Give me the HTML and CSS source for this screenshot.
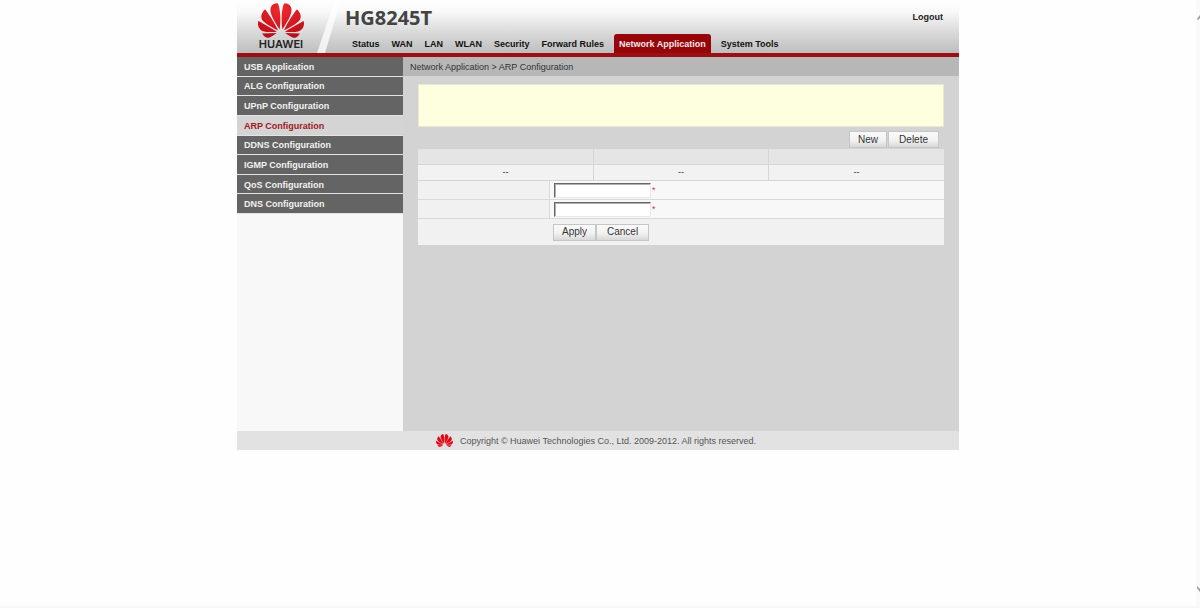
FILE: index.html
```html
<!DOCTYPE html>
<html lang="en">
<head>
<meta charset="utf-8">
<title>HG8245T</title>
<link rel="stylesheet" href="styles.css">
</head>
<body>
<svg class="symbols" aria-hidden="true">
  <symbol id="petals" viewBox="0 2.9 24 18.2">
    <path d="M3.67 6.14S1.82 7.91 1.72 9.78v.35c.08 1.51 1.22 2.4 1.22 2.4 1.83 1.79 6.26 4.04 7.3 4.55 0 0 .06.03.1-.01l.02-.04v-.04C7.52 10.8 3.67 6.14 3.67 6.14zM9.65 18.6c-.02-.08-.1-.08-.1-.08l-7.38.26c.8 1.43 2.15 2.53 3.56 2.2.96-.25 3.16-1.78 3.88-2.3.06-.05.04-.09.04-.09zm.08-.78C6.49 15.63.21 12.28.21 12.28c-.15.46-.2.9-.21 1.3v.07c0 1.07.4 1.82.4 1.82.8 1.69 2.34 2.2 2.34 2.2.7.3 1.4.31 1.4.31.12.02 4.4 0 5.54 0 .05 0 .08-.05.08-.05v-.06c0-.03-.03-.05-.03-.05zM9.06 3.19a3.42 3.42 0 00-2.57 3.15v.41c.03.6.16 1.05.16 1.05.66 2.9 3.86 7.65 4.55 8.65.05.05.1.03.1.03a.1.1 0 00.06-.1c1.06-10.6-1.11-13.42-1.11-13.42-.32.02-1.19.23-1.19.23zm8.3 2.27s-.49-1.8-2.44-2.28c0 0-.57-.14-1.17-.22 0 0-2.18 2.81-1.12 13.43.01.07.06.08.06.08.07.03.1-.03.1-.03.72-1.03 3.9-5.76 4.55-8.64 0 0 .36-1.4.02-2.34zm-2.92 13.07s-.07 0-.09.05c0 0-.01.07.03.1.7.51 2.85 2 3.88 2.3 0 0 .16.05.43.06h.14c.69-.02 1.9-.37 3-2.26l-7.4-.25zm7.83-8.41c.14-2.06-1.94-3.97-1.94-3.98 0 0-3.85 4.66-6.67 10.8 0 0-.03.08.02.13l.04.01h.06c1.06-.53 5.46-2.77 7.28-4.54 0 0 1.15-.93 1.21-2.42zm1.52 2.14s-6.28 3.37-9.52 5.55c0 0-.05.04-.03.11 0 0 .03.06.07.06 1.16 0 5.56 0 5.67-.02 0 0 .57-.02 1.27-.29 0 0 1.56-.5 2.37-2.27 0 0 .73-1.45.17-3.14z"/>
  </symbol>
</svg>
<div class="window">
  <div class="page">
    <header class="header">
      <div class="brand">
        <svg class="slash" viewBox="0 0 24 53" preserveAspectRatio="none" aria-hidden="true"><path d="M18 0H24L8 53H0Z" fill="#fff" fill-opacity=".75"/></svg>
        <svg class="brand-mark" aria-hidden="true">
          <defs><radialGradient id="shade" cx=".5" cy=".2" r=".8"><stop offset="0" stop-color="#ee2a30"/><stop offset="1" stop-color="#bd0c16"/></radialGradient></defs>
          <use href="#petals" fill="url(#shade)"/>
        </svg>
        <span class="brand-name">HUAWEI</span>
      </div>
      <div class="masthead">
        <div class="title-row">
          <h1 class="model">HG8245T</h1>
          <a class="logout" href="#">Logout</a>
        </div>
        <nav class="tabs">
          <a class="tab" href="#">Status</a>
          <a class="tab" href="#">WAN</a>
          <a class="tab" href="#">LAN</a>
          <a class="tab" href="#">WLAN</a>
          <a class="tab" href="#">Security</a>
          <a class="tab" href="#">Forward Rules</a>
          <a class="tab tab-active" href="#">Network Application</a>
          <a class="tab" href="#">System Tools</a>
        </nav>
      </div>
    </header>
    <div class="body">
      <nav class="sidebar">
        <ul class="menu">
          <li><a href="#">USB Application</a></li>
          <li><a href="#">ALG Configuration</a></li>
          <li><a href="#">UPnP Configuration</a></li>
          <li class="current"><a href="#">ARP Configuration</a></li>
          <li><a href="#">DDNS Configuration</a></li>
          <li><a href="#">IGMP Configuration</a></li>
          <li><a href="#">QoS Configuration</a></li>
          <li><a href="#">DNS Configuration</a></li>
        </ul>
      </nav>
      <main class="main">
        <div class="breadcrumb">Network Application &gt; ARP Configuration</div>
        <div class="content">
          <div class="notice"></div>
          <div class="toolbar">
            <button class="btn" type="button">New</button>
            <button class="btn btn-wide" type="button">Delete</button>
          </div>
          <table class="list">
            <thead><tr><th></th><th></th><th></th></tr></thead>
            <tbody><tr><td>--</td><td>--</td><td>--</td></tr></tbody>
          </table>
          <form class="form">
            <div class="field"><label class="field-label" for="ip"></label><div class="field-value"><input class="text" id="ip" type="text" aria-label="IP address"><span class="required">*</span></div></div>
            <div class="field"><label class="field-label" for="mac"></label><div class="field-value"><input class="text" id="mac" type="text" aria-label="MAC address"><span class="required">*</span></div></div>
            <div class="actions">
              <button class="btn" type="button">Apply</button>
              <button class="btn btn-wide" type="button">Cancel</button>
            </div>
          </form>
        </div>
      </main>
    </div>
    <footer class="footer">
      <svg class="footer-mark" aria-hidden="true"><use href="#petals"/></svg>
      <span>Copyright © Huawei Technologies Co., Ltd. 2009-2012. All rights reserved.</span>
    </footer>
  </div>
  <div class="track" aria-hidden="true">
    <svg class="arrow" viewBox="0 0 4 6"><path d="M1 5L4 1V4L2 6Z" fill="#999"/></svg>
    <svg class="arrow" viewBox="0 0 4 6"><path d="M1 0L4 3V6L1 2Z" fill="#999"/></svg>
  </div>
</div>
</body>
</html>
```
FILE: styles.css
```css
* { box-sizing: border-box; }

body {
  margin: 0;
  background: #fefefe;
  color: #333;
  font: 9px/12px "Liberation Sans", Arial, sans-serif;
}

a { color: inherit; text-decoration: none; }

.symbols { display: none; }

.window {
  display: flex;
  min-height: 100vh;
  border-bottom: 2px solid #f8f8f8;
}

.page {
  flex: 0 1 722px;
  margin: 0 auto;
}

.track {
  width: 4px;
  padding: 14px 0;
  display: flex;
  flex-direction: column;
  justify-content: space-between;
  background: #fafafa;
}

.arrow { width: 4px; height: 6px; }

/* Header */
.header {
  display: flex;
  height: 57px;
  border-bottom: 4px solid #9c1015;
  background: linear-gradient(#fefefe 0, #fafafa 20%, #dedede 55%, #bebebe 100%);
}

.brand {
  position: relative;
  flex: none;
  display: flex;
  flex-direction: column;
  align-items: center;
  width: 108px;
  padding: 3px 20px 0 0;
}

.slash {
  position: absolute;
  top: 0;
  right: 4px;
  width: 24px;
  height: 100%;
}

.brand-mark { width: 46px; height: 35px; }

.brand-name {
  color: #222;
  font: 600 11px/13px Inter, "Liberation Sans", sans-serif;
}

.masthead {
  flex: 1;
  display: flex;
  flex-direction: column;
  justify-content: space-between;
}

.title-row {
  display: flex;
  justify-content: space-between;
  padding-right: 16px;
}

.model {
  margin: 4px 0 0;
  color: #444;
  font: bold 20px/28px "Noto Sans", "Open Sans", sans-serif;
}

.logout {
  margin-top: 11px;
  color: #222;
  font-weight: bold;
}

.tabs {
  display: flex;
  gap: 2px;
  padding-left: 2px;
  color: #111;
  font-weight: bold;
  white-space: nowrap;
}

.tab { padding: 4px 5px 3px; }

.tab-active {
  margin: 0 3px;
  border-radius: 3px 3px 0 0;
  background: #960509;
  color: #f4e6e6;
}

/* Body */
.body {
  display: flex;
  min-height: 374px;
}

.sidebar {
  flex: none;
  width: 166px;
  background: #f8f8f8;
}

.menu {
  display: grid;
  grid-auto-rows: 1fr;
  height: 157px;
  margin: 0;
  padding: 0;
  list-style: none;
  font-weight: bold;
}

.menu li {
  display: flex;
  align-items: center;
  padding: 1px 0 0 7px;
  border-bottom: 1px solid #e4e4e4;
  background: #646464;
  color: #f2f2f2;
}

.menu .current { background: #d4d4d4; color: #a01822; }

.main {
  flex: 1;
  background: #d3d3d3;
}

.breadcrumb {
  padding: 4px 7px 3px;
  background: #b7b7b7;
}

.content { padding: 8px 15px; }

.notice {
  height: 43px;
  border: 1px solid #e8e8cf;
  background: #feffde;
}

.toolbar {
  display: flex;
  justify-content: flex-end;
  gap: 1px;
  padding: 4px 5px 1px 0;
}

.btn {
  height: 17px;
  padding: 0 8px;
  border: 1px solid #c6c6c6;
  background: linear-gradient(#fafafa 0, #f2f2f2 55%, #d8d8d8 100%);
  color: #333;
  font: 10px/12px "Liberation Sans", Arial, sans-serif;
}

.btn-wide { padding: 0 10px; }

.list {
  width: 100%;
  table-layout: fixed;
  border-collapse: collapse;
  background: #f2f2f2;
}

.list th,
.list td {
  height: 16px;
  padding: 0;
  border-bottom: 1px solid #d6d6d6;
  text-align: center;
}

.list th { height: 15px; background: #e5e5e5; }

.list th + th,
.list td + td { border-left: 1px solid #d6d6d6; }

.form { background: #f1f1f1; }

.field {
  display: flex;
  height: 19px;
  border-bottom: 1px solid #d9d9d9;
}

.field-label {
  width: 132px;
  border-right: 1px solid #d9d9d9;
}

.field-value {
  flex: 1;
  display: flex;
  align-items: center;
  gap: 1px;
  padding: 1px 0 0 4px;
  background: #f8f8f8;
}

.text {
  width: 97px;
  height: 15px;
  padding: 0 2px;
  border: 1px solid;
  border-color: #666 #e8e8e8 #e8e8e8 #666;
  box-shadow: inset 1px 1px #b0b0b0;
  background: #fff;
  font: 9px/12px "Liberation Sans", Arial, sans-serif;
}

.required { color: #d33; }

.actions {
  display: flex;
  padding: 5px 0 4px 135px;
}

/* Footer */
.footer {
  display: flex;
  align-items: center;
  justify-content: center;
  gap: 7px;
  height: 19px;
  padding-right: 4px;
  background: #e2e2e2;
  color: #555;
}

.footer-mark { width: 17px; height: 13px; fill: #e30613; }
```
